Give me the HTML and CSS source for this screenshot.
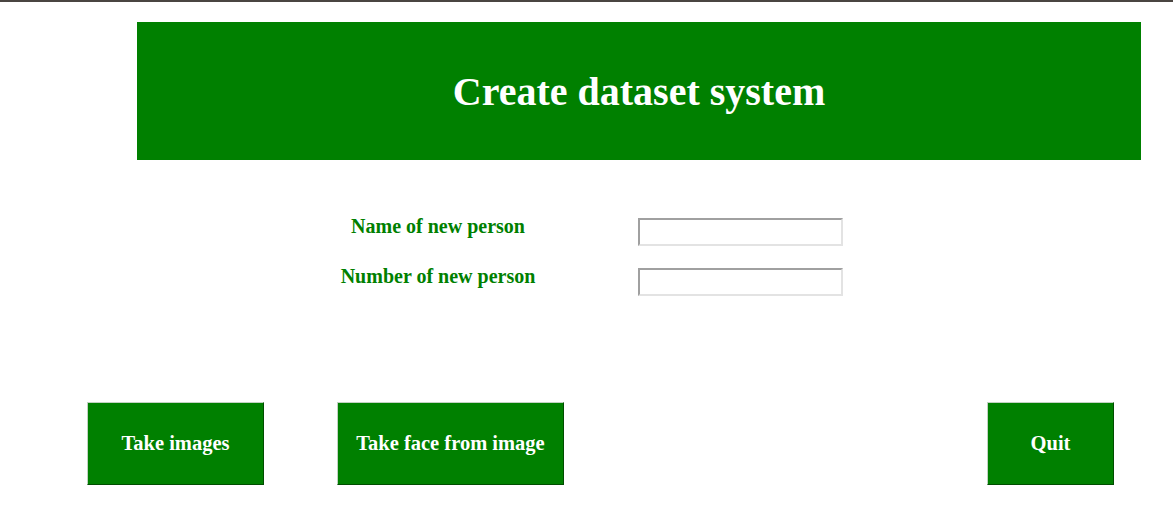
FILE: index.html
```html
<!DOCTYPE html>
<html>
<head>
<meta charset="utf-8">
<link rel="stylesheet" href="styles.css">
</head>
<body>
<div class="topline"></div>
<header class="banner"><h1>Create dataset system</h1></header>
<section class="form">
  <div class="row">
    <label class="lbl">Name of new person</label>
    <input class="field" type="text">
  </div>
  <div class="row">
    <label class="lbl">Number of new person</label>
    <input class="field" type="text">
  </div>
</section>
<section class="actions">
  <button class="btn btn-images">Take images</button>
  <button class="btn btn-face">Take face from image</button>
  <button class="btn btn-quit">Quit</button>
</section>
</body>
</html>
```
FILE: styles.css
```css
html, body {
  margin: 0;
  padding: 0;
  background: #ffffff;
  font-family: "Liberation Serif", "Times New Roman", serif;
}
.topline {
  height: 2px;
  background: #4a4541;
}
.banner {
  margin: 20px 0 0 137px;
  width: 1004px;
  height: 138px;
  background: #008000;
  display: flex;
  align-items: center;
  justify-content: center;
}
.banner h1 {
  margin: 0;
  color: #ffffff;
  font-size: 40px;
  font-weight: bold;
}
.form {
  margin-top: 58px;
  display: flex;
  flex-direction: column;
  gap: 22px;
}
.row {
  display: flex;
  align-items: flex-start;
  height: 28px;
  margin-left: 338px;
}
.lbl {
  width: 200px;
  text-align: center;
  color: #008000;
  font-size: 20px;
  font-weight: bold;
  line-height: 20px;
  margin-top: -2px;
}
.field {
  margin: 0 0 0 100px;
  box-sizing: border-box;
  width: 205px;
  height: 28px;
  padding: 0;
  border-width: 2px;
  border-style: solid;
  border-color: #a0a0a0 #e3e3e3 #e3e3e3 #a0a0a0;
  background: #ffffff;
}
.actions {
  margin-top: 106px;
  display: flex;
  padding: 0 59px 0 87px;
}
.btn {
  box-sizing: border-box;
  height: 83px;
  background: #008000;
  color: #ffffff;
  font-family: "Liberation Serif", "Times New Roman", serif;
  font-size: 20.5px;
  font-weight: bold;
  border: 1px solid;
  border-color: #c2d2c2 #004d00 #004d00 #c2d2c2;
  padding: 0;
}
.btn-images { width: 177px; }
.btn-face { width: 227px; margin-left: 73px; }
.btn-quit { width: 127px; margin-left: auto; }
```
